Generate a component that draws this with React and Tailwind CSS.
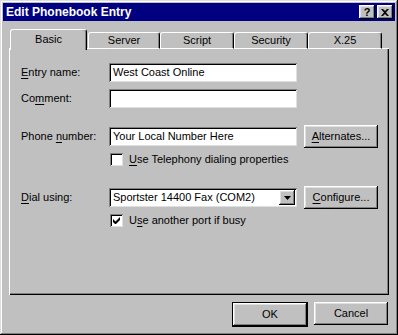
import React from "react";

const raised =
  "shadow-[inset_-1px_-1px_#000,inset_1px_1px_#fff,inset_-2px_-2px_#808080,inset_2px_2px_#dfdfdf]";
const sunken =
  "shadow-[inset_1px_1px_#808080,inset_-1px_-1px_#dfdfdf,inset_2px_2px_#000,inset_-2px_-2px_#fff]";

function U({ children }) {
  return <span className="underline underline-offset-[2px]">{children}</span>;
}

function Field({ value, className = "" }) {
  return (
    <div className={`h-[19px] w-[188px] bg-white ${sunken} flex items-center pl-[4px] text-black ${className}`}>
      {value}
    </div>
  );
}

function Button({ children, className = "" }) {
  return (
    <div className={`h-[23px] w-[74px] bg-[#c0c0c0] ${raised} flex items-center justify-center text-black ${className}`}>
      {children}
    </div>
  );
}

function Checkbox({ checked, children }) {
  return (
    <div className="flex items-center h-[13px] ml-[101px] gap-[6px]">
      <div className={`w-[13px] h-[13px] bg-white ${sunken} flex items-center justify-center`}>
        {checked && (
          <svg width="7" height="7" viewBox="0 0 7 7">
            <path d="M0 2v3l2 2h1l4-4V0L2.5 4.5z" fill="#000" />
          </svg>
        )}
      </div>
      <span>{children}</span>
    </div>
  );
}

function Row({ label, children, className = "" }) {
  return (
    <div className={`flex items-center pl-[12px] ${className}`}>
      <div className="w-[88px]">{label}</div>
      {children}
    </div>
  );
}

const tabs = [
  { name: "Basic", w: "w-[77px]" },
  { name: "Server", w: "w-[72px]" },
  { name: "Script", w: "w-[74px]" },
  { name: "Security", w: "w-[74px]" },
  { name: "X.25", w: "w-[74px]" },
];

export default function App() {
  return (
    <div
      className={`w-[398px] h-[335px] bg-[#c0c0c0] p-[3px] shadow-[inset_-1px_-1px_#000,inset_1px_1px_#dfdfdf,inset_-2px_-2px_#808080,inset_2px_2px_#fff] font-['Liberation_Sans',Arial,sans-serif] text-[11px] text-black select-none`}
    >
      {/* Title bar */}
      <div className="h-[18px] bg-[#000080] flex items-center justify-between pl-[3px] pr-[2px]">
        <span className="text-white font-bold text-[12px]">Edit Phonebook Entry</span>
        <div className="flex gap-[2px]">
          <div className={`w-[16px] h-[14px] bg-[#c0c0c0] ${raised} flex items-center justify-center font-bold text-[11px] leading-none`}>
            ?
          </div>
          <div className={`w-[16px] h-[14px] bg-[#c0c0c0] ${raised} flex items-center justify-center`}>
            <svg width="8" height="7" viewBox="0 0 8 7">
              <path d="M0 0h2l2 2 2-2h2L5 3.5 8 7H6L4 5 2 7H0l3-3.5z" fill="#000" />
            </svg>
          </div>
        </div>
      </div>

      <div className="pl-[6px] pt-[8px]">
        {/* Tabs */}
        <div className="flex items-end h-[20px] -mb-[1px] ml-[1px] relative z-10">
          {tabs.map((t, i) =>
            i === 0 ? (
              <div
                key={t.name}
                className={`${t.w} h-[21px] -mb-[1px] bg-[#c0c0c0] border-l border-t border-white border-r border-r-black rounded-t-[3px] shadow-[inset_-1px_0_#808080] flex items-center justify-center pb-[2px]`}
              >
                {t.name}
              </div>
            ) : (
              <div
                key={t.name}
                className={`${t.w} h-[17px] ${i === 1 ? "ml-[1px]" : ""} bg-[#c0c0c0] border-l border-t border-white border-r border-r-black rounded-t-[3px] shadow-[inset_-1px_0_#808080] flex items-center justify-center border-b border-b-white`}
              >
                {t.name}
              </div>
            )
          )}
        </div>

        {/* Panel */}
        <div className="w-[380px] h-[247px] shadow-[inset_1px_1px_#fff,inset_-1px_-1px_#000,inset_-2px_-2px_#808080] pt-[15px]">
          <Row label={<><U>E</U>ntry name:</>}>
            <Field value="West Coast Online" />
          </Row>
          <Row label={<>Co<U>m</U>ment:</>} className="mt-[7px]">
            <Field value="" />
          </Row>
          <Row label={<>Phone <U>n</U>umber:</>} className="mt-[17px]">
            <Field value="Your Local Number Here" />
            <Button className="ml-[7px] w-[73px]">
              <span><U>A</U>lternates...</span>
            </Button>
          </Row>
          <div className="mt-[5px]">
            <Checkbox>
              <U>U</U>se Telephony dialing properties
            </Checkbox>
          </div>
          <Row label={<><U>D</U>ial using:</>} className="mt-[20px]">
            <div className={`h-[19px] w-[188px] bg-white ${sunken} flex items-center pl-[4px] pr-[2px]`}>
              <span className="flex-1">Sportster 14400 Fax (COM2)</span>
              <div className={`w-[16px] h-[15px] bg-[#c0c0c0] ${raised} flex items-center justify-center`}>
                <svg width="7" height="4" viewBox="0 0 7 4">
                  <path d="M0 0h7L3.5 4z" fill="#000" />
                </svg>
              </div>
            </div>
            <Button className="ml-[7px] w-[73px]">
              <span><U>C</U>onfigure...</span>
            </Button>
          </Row>
          <div className="mt-[5px]">
            <Checkbox checked>
              U<U>s</U>e another port if busy
            </Checkbox>
          </div>
        </div>

        {/* Bottom buttons */}
        <div className="flex justify-end gap-[6px] mt-[7px] pr-[1px] w-[380px]">
          <div className="border border-black">
            <Button className="h-[21px] w-[73px]">OK</Button>
          </div>
          <Button className="w-[74px]">Cancel</Button>
        </div>
      </div>
    </div>
  );
}
